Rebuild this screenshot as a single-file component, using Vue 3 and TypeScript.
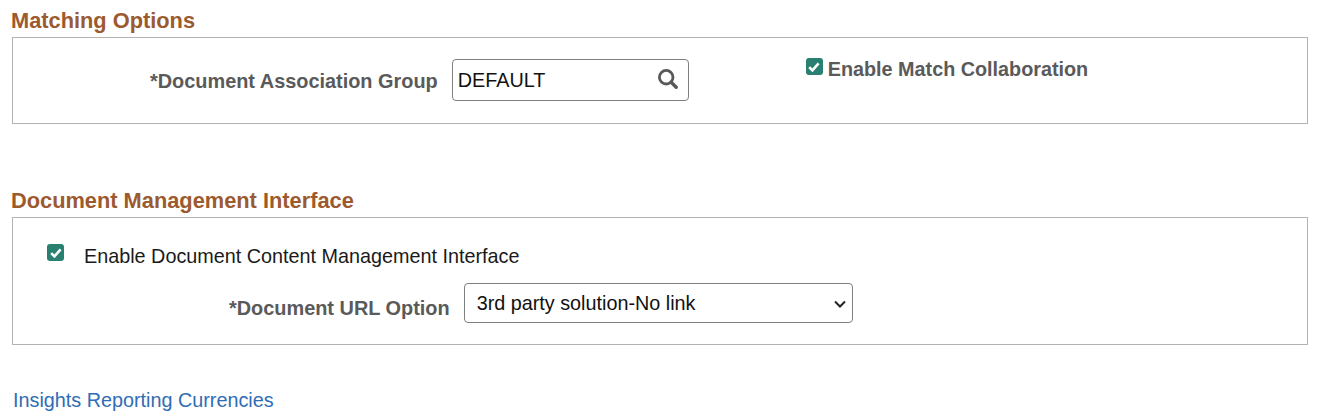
<script setup lang="ts">
const groupValue = 'DEFAULT'
const urlOptions: string[] = ['3rd party solution-No link']
</script>

<template>
  <div class="page">
    <h2 class="heading first">Matching Options</h2>
    <section class="box box-match">
      <label class="field-label label-group">*Document Association Group</label>
      <div class="prompt">
        <input class="prompt-input" type="text" :value="groupValue" />
        <svg class="search" viewBox="0 0 20 20" width="20" height="20" aria-hidden="true">
          <circle cx="8.2" cy="8.2" r="6.8" fill="none" stroke="#595959" stroke-width="2.8" />
          <path d="M13.2 13.2l5 5" fill="none" stroke="#595959" stroke-width="3.4" stroke-linecap="round" />
        </svg>
      </div>
      <div class="collab">
        <span class="check">
          <svg viewBox="0 0 16 16" width="16" height="16" aria-hidden="true">
            <path d="M3.2 8.2l3.2 3.2 6.2-7" fill="none" stroke="#fff" stroke-width="2.6" />
          </svg>
        </span>
        <span class="field-label collab-text">Enable Match Collaboration</span>
      </div>
    </section>

    <h2 class="heading second">Document Management Interface</h2>
    <section class="box box-doc">
      <div class="doc-check">
        <span class="check">
          <svg viewBox="0 0 16 16" width="16" height="16" aria-hidden="true">
            <path d="M3.2 8.2l3.2 3.2 6.2-7" fill="none" stroke="#fff" stroke-width="2.6" />
          </svg>
        </span>
        <span class="plain">Enable Document Content Management Interface</span>
      </div>
      <div class="doc-url">
        <label class="field-label label-url">*Document URL Option</label>
        <div class="select-wrap">
          <select class="url-select">
            <option v-for="o in urlOptions" :key="o">{{ o }}</option>
          </select>
          <svg class="chevron" viewBox="0 0 12 8" width="12" height="8" aria-hidden="true">
            <path d="M1 1.5l5 5 5-5" fill="none" stroke="#222" stroke-width="2" />
          </svg>
        </div>
      </div>
    </section>

    <a class="link" href="#">Insights Reporting Currencies</a>
  </div>
</template>

<style>
html, body { margin: 0; background: #fff; }
</style>

<style scoped>
.page {
  width: 1319px;
  height: 419px;
  overflow: hidden;
  box-sizing: border-box;
  padding: 8px 11px 0 12px;
  font-family: "Liberation Sans", Arial, sans-serif;
  background: #fff;
}
.heading {
  margin: 0 0 0 -1px;
  font-size: 21.8px;
  line-height: 26px;
  font-weight: 700;
  color: #9c5a2f;
}
.second { margin-top: 64px; }
.box {
  box-sizing: border-box;
  border: 1px solid #b3b3b3;
  width: 1296px;
}
.box-match {
  height: 87px;
  margin-top: 3px;
  display: flex;
  align-items: flex-start;
  padding: 21px 0 0 137px;
}
.box-doc {
  height: 128px;
  margin-top: 3px;
  padding: 26px 0 0 34px;
}
.field-label {
  font-size: 19.9px;
  line-height: 24px;
  font-weight: 700;
  color: #5a5a5a;
  white-space: nowrap;
}
.label-group { margin-top: 10px; }
.prompt {
  position: relative;
  margin-left: 14px;
  width: 237px;
  height: 42px;
}
.prompt-input {
  box-sizing: border-box;
  width: 100%;
  height: 100%;
  border: 1px solid #7f7f7f;
  border-radius: 4px;
  padding: 0 40px 0 5px;
  font: 19.8px "Liberation Sans", Arial, sans-serif;
  color: #111;
  background: #fff;
  outline: none;
}
.search {
  position: absolute;
  right: 11px;
  top: 10px;
}
.collab {
  display: flex;
  align-items: flex-start;
  gap: 5px;
  margin: -1px 0 0 117px;
}
.collab-text {
  margin-top: -1px;
  font-size: 19.8px;
}
.check {
  box-sizing: border-box;
  width: 17px;
  height: 17px;
  flex: none;
  border-radius: 3px;
  background: #2a8070;
  display: flex;
  align-items: center;
  justify-content: center;
}
.doc-check {
  display: flex;
  align-items: flex-start;
}
.plain {
  margin-left: 20px;
  font-size: 19.8px;
  line-height: 24px;
  color: #1a1a1a;
}
.doc-url {
  display: flex;
  align-items: flex-start;
  margin: 15px 0 0 182px;
}
.label-url { margin-top: 13px; }
.select-wrap {
  position: relative;
  margin-left: 14px;
  width: 389px;
  height: 40px;
}
.url-select {
  appearance: none;
  width: 100%;
  height: 100%;
  box-sizing: border-box;
  border: 1px solid #7f7f7f;
  border-radius: 4px;
  padding: 0 30px 0 12px;
  font: 19.8px "Liberation Sans", Arial, sans-serif;
  color: #111;
  background: #fff;
}
.chevron {
  position: absolute;
  right: 7px;
  top: 17px;
  pointer-events: none;
}
.link {
  display: block;
  margin: 43px 0 0 1px;
  font-size: 19.8px;
  line-height: 24px;
  color: #2f6db5;
  text-decoration: none;
}
</style>
